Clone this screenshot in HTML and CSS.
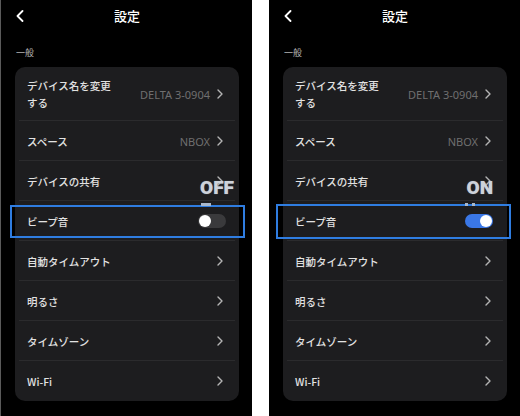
FILE: index.html
```html
<!DOCTYPE html>
<html lang="ja">
<head>
<meta charset="utf-8">
<title>設定</title>
<link rel="stylesheet" href="styles.css">
</head>
<body>
<div class="phone phone-left">
  <div class="header">
    <svg class="back" width="8" height="12" viewBox="0 0 8 12"><polyline points="6.5,1 1.5,6 6.5,11" fill="none" stroke="#fff" stroke-width="1.8" stroke-linecap="round" stroke-linejoin="round"/></svg>
    <div class="title">設定</div>
    <span></span>
  </div>
  <div class="section">一般</div>
  <div class="card">
    <div class="row row-tall"><span class="label label-wrap">デバイス名を変更する</span><span class="value">DELTA 3-0904</span><svg class="chev" width="6" height="10" viewBox="0 0 6 10"><polyline points="1,1 5,5 1,9" fill="none" stroke="#b4b4b4" stroke-width="1.4" stroke-linecap="round" stroke-linejoin="round"/></svg></div>
    <div class="row"><span class="label">スペース</span><span class="value">NBOX</span><svg class="chev" width="6" height="10" viewBox="0 0 6 10"><polyline points="1,1 5,5 1,9" fill="none" stroke="#b4b4b4" stroke-width="1.4" stroke-linecap="round" stroke-linejoin="round"/></svg></div>
    <div class="row"><span class="label">デバイスの共有</span><svg class="chev" width="6" height="10" viewBox="0 0 6 10"><polyline points="1,1 5,5 1,9" fill="none" stroke="#b4b4b4" stroke-width="1.4" stroke-linecap="round" stroke-linejoin="round"/></svg></div>
    <div class="row row-mark">
      <span class="label">ビープ音</span>
      <span class="toggle"><span class="knob"></span></span>
      <span class="highlight"></span>
      <span class="note note-off">OFF</span>
      <span class="tick tick-off"></span>
    </div>
    <div class="row"><span class="label">自動タイムアウト</span><svg class="chev" width="6" height="10" viewBox="0 0 6 10"><polyline points="1,1 5,5 1,9" fill="none" stroke="#b4b4b4" stroke-width="1.4" stroke-linecap="round" stroke-linejoin="round"/></svg></div>
    <div class="row"><span class="label">明るさ</span><svg class="chev" width="6" height="10" viewBox="0 0 6 10"><polyline points="1,1 5,5 1,9" fill="none" stroke="#b4b4b4" stroke-width="1.4" stroke-linecap="round" stroke-linejoin="round"/></svg></div>
    <div class="row"><span class="label">タイムゾーン</span><svg class="chev" width="6" height="10" viewBox="0 0 6 10"><polyline points="1,1 5,5 1,9" fill="none" stroke="#b4b4b4" stroke-width="1.4" stroke-linecap="round" stroke-linejoin="round"/></svg></div>
    <div class="row"><span class="label">Wi-Fi</span><svg class="chev" width="6" height="10" viewBox="0 0 6 10"><polyline points="1,1 5,5 1,9" fill="none" stroke="#b4b4b4" stroke-width="1.4" stroke-linecap="round" stroke-linejoin="round"/></svg></div>
  </div>
</div>

<div class="phone phone-right">
  <div class="header">
    <svg class="back" width="8" height="12" viewBox="0 0 8 12"><polyline points="6.5,1 1.5,6 6.5,11" fill="none" stroke="#fff" stroke-width="1.8" stroke-linecap="round" stroke-linejoin="round"/></svg>
    <div class="title">設定</div>
    <span></span>
  </div>
  <div class="section">一般</div>
  <div class="card">
    <div class="row row-tall"><span class="label label-wrap">デバイス名を変更する</span><span class="value">DELTA 3-0904</span><svg class="chev" width="6" height="10" viewBox="0 0 6 10"><polyline points="1,1 5,5 1,9" fill="none" stroke="#b4b4b4" stroke-width="1.4" stroke-linecap="round" stroke-linejoin="round"/></svg></div>
    <div class="row"><span class="label">スペース</span><span class="value">NBOX</span><svg class="chev" width="6" height="10" viewBox="0 0 6 10"><polyline points="1,1 5,5 1,9" fill="none" stroke="#b4b4b4" stroke-width="1.4" stroke-linecap="round" stroke-linejoin="round"/></svg></div>
    <div class="row"><span class="label">デバイスの共有</span><svg class="chev" width="6" height="10" viewBox="0 0 6 10"><polyline points="1,1 5,5 1,9" fill="none" stroke="#b4b4b4" stroke-width="1.4" stroke-linecap="round" stroke-linejoin="round"/></svg></div>
    <div class="row row-mark">
      <span class="label">ビープ音</span>
      <span class="toggle toggle-on"><span class="knob"></span></span>
      <span class="highlight highlight-right"></span>
      <span class="note note-on">ON</span>
      <span class="tick tick-on1"></span>
      <span class="tick tick-on2"></span>
    </div>
    <div class="row"><span class="label">自動タイムアウト</span><svg class="chev" width="6" height="10" viewBox="0 0 6 10"><polyline points="1,1 5,5 1,9" fill="none" stroke="#b4b4b4" stroke-width="1.4" stroke-linecap="round" stroke-linejoin="round"/></svg></div>
    <div class="row"><span class="label">明るさ</span><svg class="chev" width="6" height="10" viewBox="0 0 6 10"><polyline points="1,1 5,5 1,9" fill="none" stroke="#b4b4b4" stroke-width="1.4" stroke-linecap="round" stroke-linejoin="round"/></svg></div>
    <div class="row"><span class="label">タイムゾーン</span><svg class="chev" width="6" height="10" viewBox="0 0 6 10"><polyline points="1,1 5,5 1,9" fill="none" stroke="#b4b4b4" stroke-width="1.4" stroke-linecap="round" stroke-linejoin="round"/></svg></div>
    <div class="row"><span class="label">Wi-Fi</span><svg class="chev" width="6" height="10" viewBox="0 0 6 10"><polyline points="1,1 5,5 1,9" fill="none" stroke="#b4b4b4" stroke-width="1.4" stroke-linecap="round" stroke-linejoin="round"/></svg></div>
  </div>
</div>
</body>
</html>
```

FILE: styles.css
```css
html, body {
  margin: 0;
  padding: 0;
}
body {
  width: 520px;
  height: 416px;
  background: #fff;
  display: flex;
  gap: 17px;
  overflow: hidden;
  font-family: "Noto Sans", "Noto Sans CJK JP", sans-serif;
}
.phone {
  box-sizing: border-box;
  height: 416px;
  background: #000;
  padding: 0 13px 0 14px;
  position: relative;
}
.phone-left {
  width: 252px;
  border-left: 1px solid #5a5a5a;
}
.phone-right {
  width: 251px;
}
.header {
  height: 32px;
  display: grid;
  grid-template-columns: 20px 1fr 20px;
  align-items: center;
}
.back {
  display: block;
  margin-left: 1px;
}
.title {
  text-align: center;
  color: #fff;
  font-family: "Noto Sans CJK JP", sans-serif;
  font-size: 13px;
  font-weight: 500;
  line-height: 16px;
}
.section {
  margin: 14px 0 7px 1px;
  height: 14px;
  line-height: 14px;
  font-family: "Noto Sans CJK JP", sans-serif;
  font-size: 9px;
  color: #b8b8b8;
}
.card {
  width: 224px;
  background: #1d1d1f;
  border-radius: 10px;
}
.row {
  position: relative;
  height: 40px;
  display: flex;
  align-items: center;
  padding: 0 16px 0 12px;
}
.row::after {
  content: "";
  position: absolute;
  left: 4px;
  right: 4px;
  bottom: 0;
  height: 1px;
  background: #2b2b2d;
}
.row:last-child::after {
  display: none;
}
.row-tall {
  height: 54px;
}
.label {
  flex: 1;
  color: #e2e2e2;
  font-family: "Noto Sans CJK JP", sans-serif;
  font-size: 10.5px;
  font-weight: 500;
  line-height: 17px;
}
.label-wrap {
  flex: 0 0 auto;
  max-width: 90px;
  margin-right: auto;
}
.value {
  color: #6f6f6f;
  font-family: "Noto Sans", sans-serif;
  font-size: 11px;
  margin-right: 7px;
}
.chev {
  display: block;
  flex: none;
}
.toggle {
  flex: none;
  width: 28px;
  height: 14px;
  border-radius: 7px;
  background: #3a3a3c;
  margin-right: -3px;
  position: relative;
  box-sizing: border-box;
  padding: 1px;
  display: flex;
}
.toggle-on {
  background: #3a77e6;
  justify-content: flex-end;
  margin-right: -2px;
}
.knob {
  width: 12px;
  height: 12px;
  border-radius: 50%;
  background: #fff;
}
.highlight {
  position: absolute;
  top: 4px;
  bottom: 3px;
  left: -5px;
  right: -6px;
  border: 2px solid #2f7de1;
}
.highlight-right {
  left: -7px;
  right: -4px;
  top: 3px;
  bottom: 2px;
}
.note {
  position: absolute;
  top: -23px;
  font-family: Roboto, "Liberation Sans", sans-serif;
  font-weight: 900;
  font-size: 19px;
  line-height: 19px;
  color: #cdd2da;
  text-shadow: 0 0 1px #7d8591;
}
.note-off {
  right: 5px;
}
.note-on {
  right: 14px;
}
.tick {
  position: absolute;
  top: 2px;
  height: 3px;
  background: #a9b8cc;
}
.tick-off {
  left: 186px;
  width: 10px;
}
.tick-on1 {
  left: 182px;
  width: 3px;
}
.tick-on2 {
  left: 189px;
  width: 3px;
}
```
